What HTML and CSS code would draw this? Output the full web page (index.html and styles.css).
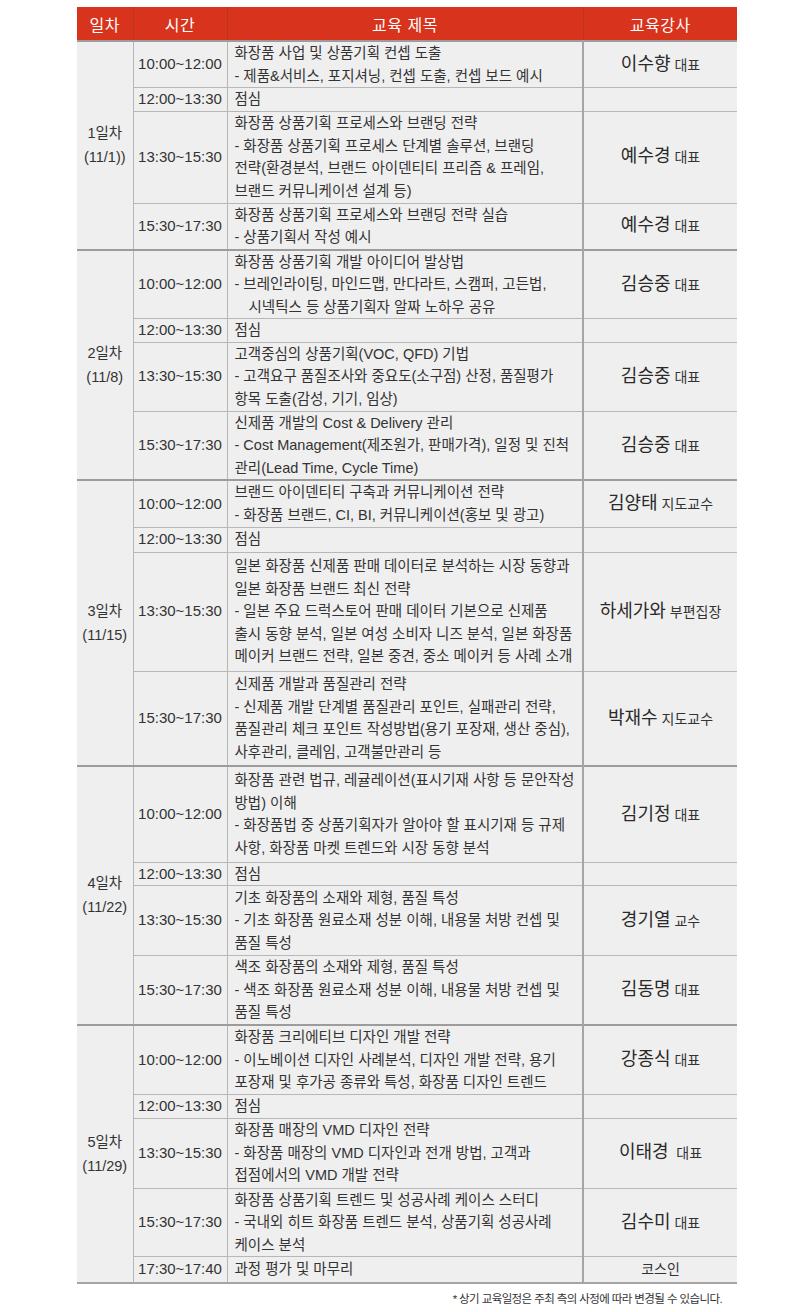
FILE: index.html
```html
<!DOCTYPE html>
<html lang="ko">
<head>
<meta charset="utf-8">
<link rel="stylesheet" href="styles.css">
</head>
<body>
<div class="page">
<table class="sched">
<colgroup><col class="c-day"><col class="c-time"><col class="c-title"><col class="c-inst"></colgroup>
<thead>
<tr><th>일차</th><th>시간</th><th>교육 제목</th><th>교육강사</th></tr>
</thead>
<tbody class="day">
<tr class="h44"><td class="dcell" rowspan="4">1일차<br>(11/1))</td><td class="time">10:00~12:00</td><td class="title">화장품 사업 및 상품기획 컨셉 도출<br>- 제품&amp;서비스, 포지셔닝, 컨셉 도출, 컨셉 보드 예시</td><td class="inst"><span class="nm">이수향</span> <span class="rk">대표</span></td></tr>
<tr class="h23"><td class="time">12:00~13:30</td><td class="title">점심</td><td class="inst"></td></tr>
<tr class="h92"><td class="time">13:30~15:30</td><td class="title">화장품 상품기획 프로세스와 브랜딩 전략<br>- 화장품 상품기획 프로세스 단계별 솔루션, 브랜딩<br>전략(환경분석, 브랜드 아이덴티티 프리즘 &amp; 프레임,<br>브랜드 커뮤니케이션 설계 등)</td><td class="inst"><span class="nm">예수경</span> <span class="rk">대표</span></td></tr>
<tr class="h44"><td class="time">15:30~17:30</td><td class="title">화장품 상품기획 프로세스와 브랜딩 전략 실습<br>- 상품기획서 작성 예시</td><td class="inst"><span class="nm">예수경</span> <span class="rk">대표</span></td></tr>
</tbody>
<tbody class="day">
<tr class="h69"><td class="dcell" rowspan="4">2일차<br>(11/8)</td><td class="time">10:00~12:00</td><td class="title">화장품 상품기획 개발 아이디어 발상법<br>- 브레인라이팅, 마인드맵, 만다라트, 스캠퍼, 고든법,<br><span class="ind">시넥틱스 등 상품기획자 알짜 노하우 공유</span></td><td class="inst"><span class="nm">김승중</span> <span class="rk">대표</span></td></tr>
<tr class="h23"><td class="time">12:00~13:30</td><td class="title">점심</td><td class="inst"></td></tr>
<tr class="h69"><td class="time">13:30~15:30</td><td class="title">고객중심의 상품기획(VOC, QFD) 기법<br>- 고객요구 품질조사와 중요도(소구점) 산정, 품질평가<br>항목 도출(감성, 기기, 임상)</td><td class="inst"><span class="nm">김승중</span> <span class="rk">대표</span></td></tr>
<tr class="h69"><td class="time">15:30~17:30</td><td class="title">신제품 개발의 Cost &amp; Delivery 관리<br>- Cost Management(제조원가, 판매가격), 일정 및 진척<br>관리(Lead Time, Cycle Time)</td><td class="inst"><span class="nm">김승중</span> <span class="rk">대표</span></td></tr>
</tbody>
<tbody class="day">
<tr class="h47"><td class="dcell" rowspan="4">3일차<br>(11/15)</td><td class="time">10:00~12:00</td><td class="title">브랜드 아이덴티티 구축과 커뮤니케이션 전략<br>- 화장품 브랜드, CI, BI, 커뮤니케이션(홍보 및 광고)</td><td class="inst"><span class="nm">김양태</span> <span class="rk">지도교수</span></td></tr>
<tr class="h25"><td class="time">12:00~13:30</td><td class="title">점심</td><td class="inst"></td></tr>
<tr class="h119"><td class="time">13:30~15:30</td><td class="title">일본 화장품 신제품 판매 데이터로 분석하는 시장 동향과<br>일본 화장품 브랜드 최신 전략<br>- 일본 주요 드럭스토어 판매 데이터 기본으로 신제품<br>출시 동향 분석, 일본 여성 소비자 니즈 분석, 일본 화장품<br>메이커 브랜드 전략, 일본 중견, 중소 메이커 등 사례 소개</td><td class="inst"><span class="nm">하세가와</span> <span class="rk">부편집장</span></td></tr>
<tr class="h95"><td class="time">15:30~17:30</td><td class="title">신제품 개발과 품질관리 전략<br>- 신제품 개발 단계별 품질관리 포인트, 실패관리 전략,<br>품질관리 체크 포인트 작성방법(용기 포장재, 생산 중심),<br>사후관리, 클레임, 고객불만관리 등</td><td class="inst"><span class="nm">박재수</span> <span class="rk">지도교수</span></td></tr>
</tbody>
<tbody class="day">
<tr class="h96"><td class="dcell" rowspan="4">4일차<br>(11/22)</td><td class="time">10:00~12:00</td><td class="title">화장품 관련 법규, 레귤레이션(표시기재 사항 등 문안작성<br>방법) 이해<br>- 화장품법 중 상품기획자가 알아야 할 표시기재 등 규제<br>사항, 화장품 마켓 트렌드와 시장 동향 분석</td><td class="inst"><span class="nm">김기정</span> <span class="rk">대표</span></td></tr>
<tr class="h22"><td class="time">12:00~13:30</td><td class="title">점심</td><td class="inst"></td></tr>
<tr class="h70"><td class="time">13:30~15:30</td><td class="title">기초 화장품의 소재와 제형, 품질 특성<br>- 기초 화장품 원료소재 성분 이해, 내용물 처방 컨셉 및<br>품질 특성</td><td class="inst"><span class="nm">경기열</span> <span class="rk">교수</span></td></tr>
<tr class="h68"><td class="time">15:30~17:30</td><td class="title">색조 화장품의 소재와 제형, 품질 특성<br>- 색조 화장품 원료소재 성분 이해, 내용물 처방 컨셉 및<br>품질 특성</td><td class="inst"><span class="nm">김동명</span> <span class="rk">대표</span></td></tr>
</tbody>
<tbody class="day">
<tr class="h70"><td class="dcell" rowspan="5">5일차<br>(11/29)</td><td class="time">10:00~12:00</td><td class="title">화장품 크리에티브 디자인 개발 전략<br>- 이노베이션 디자인 사례분석, 디자인 개발 전략, 용기<br>포장재 및 후가공 종류와 특성, 화장품 디자인 트렌드</td><td class="inst"><span class="nm">강종식</span> <span class="rk">대표</span></td></tr>
<tr class="h22"><td class="time">12:00~13:30</td><td class="title">점심</td><td class="inst"></td></tr>
<tr class="h70"><td class="time">13:30~15:30</td><td class="title">화장품 매장의 VMD 디자인 전략<br>- 화장품 매장의 VMD 디자인과 전개 방법, 고객과<br>접점에서의 VMD 개발 전략</td><td class="inst"><span class="nm">이태경</span>&nbsp; <span class="rk">대표</span></td></tr>
<tr class="h68"><td class="time">15:30~17:30</td><td class="title">화장품 상품기획 트렌드 및 성공사례 케이스 스터디<br>- 국내외 히트 화장품 트렌드 분석, 상품기획 성공사례<br>케이스 분석</td><td class="inst"><span class="nm">김수미</span> <span class="rk">대표</span></td></tr>
<tr class="h26"><td class="time">17:30~17:40</td><td class="title">과정 평가 및 마무리</td><td class="inst"><span class="rk">코스인</span></td></tr>
</tbody>
</table>
<p class="note">* 상기 교육일정은 주최 측의 사정에 따라 변경될 수 있습니다.</p>
</div>
</body>
</html>
```

FILE: styles.css
```css
html, body {
  margin: 0;
  padding: 0;
  background: #ffffff;
}
.page {
  padding: 7px 0 0 77px;
  width: 660px;
  font-family: "Liberation Sans", "Noto Sans CJK KR", sans-serif;
  color: #333333;
}
.sched {
  border-collapse: collapse;
  width: 660px;
  table-layout: fixed;
  background: #efefef;
}
.c-day { width: 56px; }
.c-time { width: 94px; }
.c-title { width: 356px; }
.c-inst { width: 154px; }
.sched th {
  background: #d8331c;
  color: #ffffff;
  font-weight: normal;
  font-size: 16px;
  height: 33px;
  padding: 0;
  text-align: center;
  border-left: 1px solid #b8361f;
  letter-spacing: 0.5px;
}
.sched th:first-child { border-left: none; }
.sched td {
  border: 1px solid #b7b7b7;
  padding: 0;
  font-size: 14px;
  line-height: 22.5px;
  vertical-align: middle;
  white-space: nowrap;
}
.sched td.dcell {
  text-align: center;
  font-size: 14.5px;
  line-height: 24px;
  border-left: none;
}
.sched td.time {
  text-align: center;
  font-size: 15px;
}
.sched td.title {
  padding-left: 7px;
  font-size: 14.5px;
  letter-spacing: 0;
}
.sched td.inst {
  text-align: center;
  border-left: 2px solid #a5a5a5;
  border-right: none;
}
.h22 { height: 22px; }
.h23 { height: 23px; }
.h25 { height: 25px; }
.h26 { height: 26px; }
.h44 { height: 44px; }
.h47 { height: 47px; }
.h68 { height: 68px; }
.h69 { height: 69px; }
.h70 { height: 70px; }
.h92 { height: 92px; }
.h95 { height: 95px; }
.h96 { height: 96px; }
.h119 { height: 119px; }
.ind { padding-left: 14px; }
.nm { font-size: 18px; color: #2a2a2a; }
.rk { font-size: 14px; color: #333333; }
.sched tbody.day { border-top: 2px solid #9c9c9c; }
.sched tbody.day:last-child { border-bottom: 2px solid #a5a5a5; }
.note {
  margin: 6px 15px 0 0;
  text-align: right;
  font-size: 11.5px;
  letter-spacing: -0.6px;
  color: #333333;
}
```
